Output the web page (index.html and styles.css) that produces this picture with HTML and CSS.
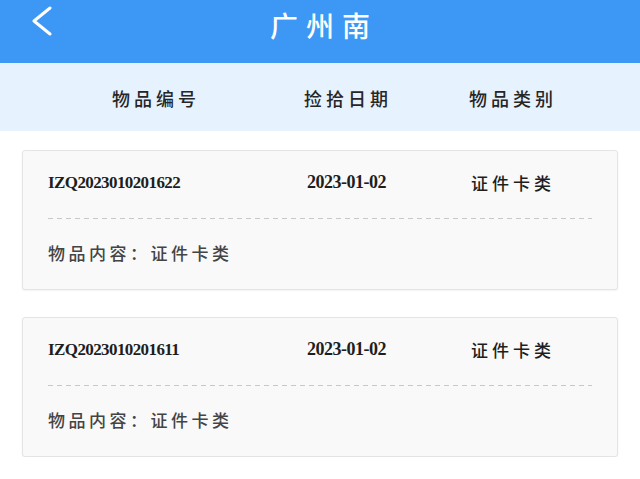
FILE: index.html
```html
<!DOCTYPE html>
<html lang="zh-CN">
<head>
<meta charset="utf-8">
<title>广州南</title>
<link rel="stylesheet" href="styles.css">
</head>
<body>
<header class="topbar">
  <span class="back">
    <svg width="22" height="30" viewBox="0 0 22 30"><polyline points="19,2 3,15 19,28" fill="none" stroke="#fff" stroke-width="3" stroke-linecap="round" stroke-linejoin="round"/></svg>
  </span>
  <h1 class="title">广州南</h1>
</header>
<div class="colhead">
  <span>物品编号</span>
  <span>捡拾日期</span>
  <span>物品类别</span>
</div>
<main class="list">
  <section class="card">
    <div class="row">
      <span class="code">IZQ2023010201622</span>
      <span class="date">2023-01-02</span>
      <span class="cat">证件卡类</span>
    </div>
    <div class="dash"></div>
    <div class="content">物品内容：证件卡类</div>
  </section>
  <section class="card">
    <div class="row">
      <span class="code">IZQ2023010201611</span>
      <span class="date">2023-01-02</span>
      <span class="cat">证件卡类</span>
    </div>
    <div class="dash"></div>
    <div class="content">物品内容：证件卡类</div>
  </section>
</main>
</body>
</html>
```
FILE: styles.css
```css
* { box-sizing: border-box; }
body {
  margin: 0;
  background: #ffffff;
  font-family: "Noto Sans CJK SC", sans-serif;
  color: #222;
}
.topbar {
  position: relative;
  height: 63px;
  background: #3c97f5;
  display: flex;
  align-items: center;
  justify-content: center;
}
.back {
  position: absolute;
  left: 31px;
  top: 6px;
  display: block;
}
.back svg { display: block; }
.title {
  margin: 0;
  padding-left: 8px;
  color: #fff;
  font-size: 28px;
  font-weight: 500;
  letter-spacing: 8px;
  line-height: 36px;
  margin-top: -14px;
}
.colhead {
  height: 68px;
  background: #e6f2fd;
  display: grid;
  grid-template-columns: 192px 165px auto;
  align-items: center;
  padding-left: 112px;
  font-size: 18px;
  font-weight: 500;
  letter-spacing: 4px;
  color: #262626;
  padding-top: 2px;
}
.list {
  padding: 19px 22px 0;
  display: flex;
  flex-direction: column;
  gap: 27px;
}
.card {
  height: 140px;
  background: #f9f9f9;
  border: 1px solid #e4e4e4;
  border-radius: 3px;
  box-shadow: 0 1px 2px rgba(0,0,0,0.05);
  padding: 19px 25px 0;
}
.row {
  display: grid;
  grid-template-columns: 259px 164px auto;
  align-items: center;
  height: 24px;
}
.code, .date {
  font-family: "Liberation Serif", serif;
  font-weight: bold;
  color: #1e1e1e;
}
.code { font-size: 17px; letter-spacing: -0.6px; }
.date { font-size: 18px; letter-spacing: -0.5px; }
.cat {
  font-size: 17px;
  font-weight: 500;
  letter-spacing: 4px;
  color: #1e1e1e;
}
.dash {
  height: 1px;
  margin-top: 24px;
  background: repeating-linear-gradient(to right, #c8c8c8 0 5px, transparent 5px 9px);
}
.content {
  margin-top: 22px;
  height: 24px;
  line-height: 24px;
  font-size: 17px;
  font-weight: 500;
  letter-spacing: 3.5px;
  color: #444;
}
```
